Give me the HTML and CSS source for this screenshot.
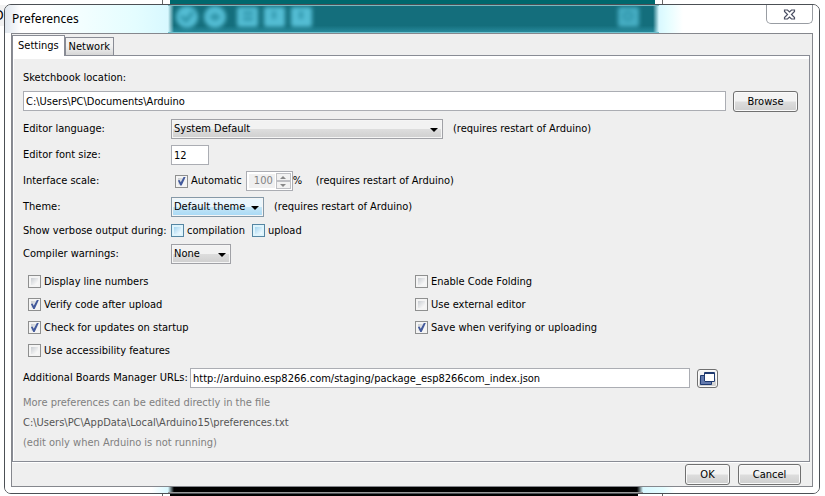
FILE: index.html
```html
<!DOCTYPE html>
<html lang="en">
<head>
<meta charset="utf-8">
<title>Preferences</title>
<link rel="stylesheet" href="styles.css">
</head>
<body>
<div class="desktop" aria-hidden="true">
  <div class="desk-left">D</div>
  <div class="editor"><div class="editor-head"></div><div class="console"></div></div>
  <div class="desk-right"></div>
</div>
<main class="dialog">
  <div class="glass-foot" aria-hidden="true"><div class="foot-left"></div><div class="foot-band"></div><div class="foot-right"></div></div>
  <header class="titlebar">
    <div class="glass" aria-hidden="true">
      <div class="glass-left"></div>
      <div class="glass-band">
        <svg class="tools" width="160" height="28" viewBox="0 0 160 28">
          <g fill="#54bdd4"><circle cx="19" cy="11" r="11"/><circle cx="47" cy="11" r="11"/><rect x="69" y="1" width="21" height="20" rx="2"/><rect x="96" y="1" width="21" height="20" rx="2"/><rect x="123" y="1" width="21" height="20" rx="2"/></g>
          <g fill="none" stroke="#2a8fa3" stroke-width="3"><path d="M13 10l5 5 7-9M42 11h10M47 7v8M75 7h10M75 13h10M106 5v8M133 5v8"/></g>
        </svg>
        <svg class="tools" width="48" height="28" viewBox="0 0 48 28"><rect x="7" y="1" width="21" height="20" rx="2" fill="#46adc3"/><circle cx="17" cy="10" r="4" fill="none" stroke="#2a8fa3" stroke-width="2"/></svg>
      </div>
      <div class="glass-right"></div>
    </div>
    <h1>Preferences</h1>
    <button class="close" aria-label="Close"><svg width="13" height="11" viewBox="0 0 13 11"><path d="M1.500 1h3l2 2 2-2h3v1.500L8.500 5.500l3 3V10h-3l-2-2-2 2h-3V8.500l3-3-3-3z" fill="#fff" stroke="#4b4f63" stroke-width="1.200"/></svg></button>
  </header>
  <form class="client">
    <nav class="tabs" role="tablist">
      <button type="button" class="tab active" role="tab" aria-selected="true">Settings</button>
      <button type="button" class="tab" role="tab" aria-selected="false">Network</button>
    </nav>
    <section class="panel">
      <label class="line" for="sketchbook">Sketchbook location:</label>
      <div class="path-row">
        <input class="field grow" id="sketchbook" type="text" value="C:\Users\PC\Documents\Arduino">
        <button type="button" class="btn browse">Browse</button>
      </div>
      <div class="options">
        <label for="lang">Editor language:</label>
        <div class="cell"><span class="drop wide"><select id="lang"><option>System Default</option></select></span><span class="hint">(requires restart of Arduino)</span></div>
        <label for="size">Editor font size:</label>
        <div class="cell"><input class="field size" id="size" type="text" value="12"></div>
        <label for="scale">Interface scale:</label>
        <div class="cell scale">
          <label class="check"><input type="checkbox" checked>Automatic</label>
          <span class="spinner"><input id="scale" type="text" value="100" disabled><span class="steps"><button type="button" class="up" aria-label="Increase" disabled></button><button type="button" class="down" aria-label="Decrease" disabled></button></span></span>
          <span class="unit">%</span><span class="hint">(requires restart of Arduino)</span>
        </div>
        <label for="theme">Theme:</label>
        <div class="cell"><span class="drop theme"><select id="theme"><option>Default theme</option></select></span><span class="hint">(requires restart of Arduino)</span></div>
        <span>Show verbose output during:</span>
        <div class="cell verbose">
          <label class="check hot"><input type="checkbox">compilation</label>
          <label class="check hot"><input type="checkbox">upload</label>
        </div>
        <label for="warn">Compiler warnings:</label>
        <div class="cell"><span class="drop warn"><select id="warn"><option>None</option></select></span></div>
      </div>
      <div class="checks">
        <label class="check"><input type="checkbox">Display line numbers</label>
        <label class="check"><input type="checkbox">Enable Code Folding</label>
        <label class="check"><input type="checkbox" checked>Verify code after upload</label>
        <label class="check"><input type="checkbox">Use external editor</label>
        <label class="check"><input type="checkbox" checked>Check for updates on startup</label>
        <label class="check"><input type="checkbox" checked>Save when verifying or uploading</label>
        <label class="check"><input type="checkbox">Use accessibility features</label>
      </div>
      <div class="url-row">
        <label for="urls">Additional Boards Manager URLs:</label>
        <input class="field grow" id="urls" type="text" value="http://arduino.esp8266.com/staging/package_esp8266com_index.json">
        <button type="button" class="btn expand" aria-label="Edit URLs"><svg width="17" height="15" viewBox="0 0 17 15"><path d="M1.500 4.500h11v9h-11z" fill="#6279ad" stroke="#1f3a70"/><path d="M5 1h11v10H5z" fill="#fff"/><path d="M5.500 1.500h10v9h-10zM5.500 2.500h10" fill="none" stroke="#1f3a70"/></svg></button>
      </div>
      <p class="note">More preferences can be edited directly in the file</p>
      <p class="note file">C:\Users\PC\AppData\Local\Arduino15\preferences.txt</p>
      <p class="note">(edit only when Arduino is not running)</p>
    </section>
    <footer class="actions">
      <button type="button" class="btn ok">OK</button>
      <button type="button" class="btn cancel">Cancel</button>
    </footer>
  </form>
</main>
</body>
</html>
```
FILE: styles.css
```css
* { box-sizing: border-box; }
body {
  margin: 0;
  min-height: 100vh;
  padding: 4px 5px 2px 4px;
  display: flex;
  background: #fff;
  color: #000;
  font: 11px/16px "DejaVu Sans Condensed", "DejaVu Sans", sans-serif;
}
input, button, select { font: inherit; color: inherit; margin: 0; }

/* windows behind the dialog */
.desktop { position: absolute; inset: 0; display: flex; overflow: hidden; }
.desk-left {
  width: 163px;
  padding-top: 7px;
  border-right: 1px solid #666;
  background: linear-gradient(#fff 5px, #f2f2f2 5px 26px, #fff 26px);
  font-size: 14px;
  text-indent: -6px;
}
.editor { flex: 1; padding: 0 7px; display: flex; flex-direction: column; justify-content: space-between; }
.editor-head { height: 8px; background: #00686d; }
.console { height: 10px; background: #000; margin-right: 17px; }
.desk-right { width: 163px; border-left: 1px solid #666; }

.dialog {
  position: relative;
  flex: 1;
  display: flex;
  flex-direction: column;
  border: 1px solid #4c5055;
  border-radius: 7px;
  background: #fff;
  padding: 0 6px 6px;
}
.titlebar { display: flex; justify-content: space-between; height: 28px; }
.titlebar h1 { position: relative; margin: 0 0 0 1px; font: 12px/28px "Noto Sans", sans-serif; }
.glass { position: absolute; top: 0; left: 0; right: 0; height: 28px; display: flex; overflow: hidden; border-radius: 6px 6px 0 0; }
.glass-left { width: 163px; background: linear-gradient(90deg, #dfe6ee, #fff 16px, #fff 20%, #e4fdff 80%, #d8f8ff); }
.glass-band {
  flex: 1;
  display: flex;
  justify-content: space-between;
  border-top: 1px solid #7cb8bf;
  border-bottom: 1px solid #70c3d0;
  background:
    linear-gradient(90deg, #d8f8ff, transparent 6px calc(100% - 6px), #d8f8ff),
    linear-gradient(#146e7c 75%, #27899b);
}
.glass-right { width: 160px; background: linear-gradient(90deg, #d8f8ff, #e4fdff 8px, #fff 24px); }
.glass-foot { position: absolute; left: 0; right: 0; bottom: 0; height: 7px; display: flex; overflow: hidden; border-radius: 0 0 6px 6px; }
.foot-left { width: 163px; background: linear-gradient(90deg, #fff 90%, #d8f8ff); }
.foot-band {
  flex: 1;
  border-bottom: 1px solid #9a9a9a;
  background: linear-gradient(90deg, #d8f8ff, #000 6px calc(100% - 6px), #d8f8ff);
}
.foot-right { width: 176px; background: linear-gradient(90deg, #d8f8ff, #e4fdff 20px, #fff 32px); }
.tools { filter: blur(2px); }
.close {
  position: relative;
  width: 47px;
  height: 19px;
  padding: 0;
  border: 1px solid #999da3;
  border-top: 0;
  border-radius: 0 0 5px 5px;
  background: #fff;
  display: grid;
  place-items: center;
}

.client {
  position: relative;
  flex: 1;
  display: flex;
  flex-direction: column;
  background: #efefef;
  border: 1px solid #85878d;
}
.tabs { display: flex; align-items: flex-end; height: 21px; }
.tab { height: 18px; padding: 0 3px; border: 1px solid #898c95; border-bottom: 0; background: linear-gradient(#f2f2f2 45%, #d6d6d6); }
.tab.active { position: relative; height: 21px; padding: 0 5px; margin-bottom: -1px; background: #fff; }
.panel {
  flex: 1;
  margin-right: 2px;
  padding: 10px 8px 0 10px;
  border: 1px solid #898c95;
  box-shadow: inset 0 3px #fff, inset 1px 0 #fff, 0 1px #fff;
}
.line { display: block; padding-top: 4px; }
.field {
  height: 20px;
  min-width: 0;
  padding: 0 2px;
  border: 1px solid #abadb3;
  background: #fff;
}
.grow { flex: 1; }
.path-row { display: flex; gap: 7px; margin-top: 5px; padding-right: 3px; }
.btn {
  height: 21px;
  padding: 0;
  border: 1px solid #707070;
  border-radius: 3px;
  background: linear-gradient(#f3f3f3 48%, #dddddd 52%, #cfcfcf);
  box-shadow: inset 0 0 0 1px #fafafa;
}
.browse { width: 65px; }
.options {
  display: grid;
  grid-template-columns: 148px 1fr;
  grid-template-rows: repeat(4, 20px) 15px 20px;
  row-gap: 6px;
  align-items: center;
  margin-top: 7px;
}
.cell { display: flex; align-items: center; white-space: nowrap; }
.hint { margin-left: 10px; }
.size { width: 38px; }
.drop { position: relative; display: flex; height: 20px; }
.drop select {
  appearance: none;
  width: 100%;
  padding: 0 2px;
  border: 1px solid #a0a1a6;
  border-radius: 0;
  background: linear-gradient(#f2f2f2 48%, #dddddd 52%, #cfcfcf);
  box-shadow: inset 0 0 0 1px #f5f5f5;
}
.drop::after {
  content: "";
  position: absolute;
  right: 5px;
  top: 9px;
  border: 4px solid transparent;
  border-top-color: #000;
  border-bottom: 0;
  pointer-events: none;
}
.wide { width: 272px; }
.theme { width: 93px; }
.warn { width: 60px; }
.theme select { border-color: #8599a8; background: linear-gradient(#eaf6fd 48%, #c4e5f6 52%, #a7d9f5); }

.check { display: flex; align-items: center; gap: 3px; }
.check input {
  appearance: none;
  width: 13px;
  height: 13px;
  border: 1px solid #8e8f8f;
  background: linear-gradient(135deg, #c9cdd2, #f6f6f6 80%) content-box, #f4f4f4;
  padding: 2px;
  position: relative;
}
.check input:checked::before {
  content: "";
  position: absolute;
  inset: 1px;
  background: #435a9c;
  clip-path: polygon(10% 45%, 28% 38%, 42% 64%, 76% 0, 98% 0, 52% 100%, 36% 100%);
}
.hot input { border-color: #5586a3; background: linear-gradient(135deg, #a3d5f0, #eef9ff 90%) content-box, #def4fc; }
.scale { padding-left: 4px; }
.verbose { gap: 7px; }
.spinner { display: flex; width: 47px; height: 20px; margin-left: 4px; padding: 1px; border: 1px solid #abadb3; background: #fff; }
.spinner input { flex: 1; min-width: 0; padding: 0 2px; border: 1px solid #fff; background: #f0f0f0; color: #838383; text-align: right; }
.unit { width: 13px; }
.steps { display: flex; flex-direction: column; width: 15px; }
.steps button { flex: 1; padding: 0; display: grid; place-items: center; border: 1px solid #bfc0c4; background: #f2f2f2; }
.steps button::before { content: ""; border: 3px solid transparent; }
.steps .up::before { border-top: 0; border-bottom-color: #888; }
.steps .down::before { border-bottom: 0; border-top-color: #888; }

.checks { display: grid; grid-template-columns: 387px 1fr; grid-auto-rows: 17px; row-gap: 6px; margin: 9px 0 9px 5px; }
.url-row { display: flex; align-items: center; padding-right: 83px; }
.url-row label { width: 167px; white-space: nowrap; }
.expand { width: 21px; height: 19px; margin-left: 7px; display: grid; place-items: center; }
.note { margin: 0; line-height: 20px; color: #808080; }
.url-row + .note { margin-top: 5px; }
.note.file { color: #555; }
.actions { display: flex; justify-content: flex-end; gap: 8px; height: 24px; padding: 2px 11px 0; }
.ok { width: 45px; }
.cancel { width: 63px; }
```
